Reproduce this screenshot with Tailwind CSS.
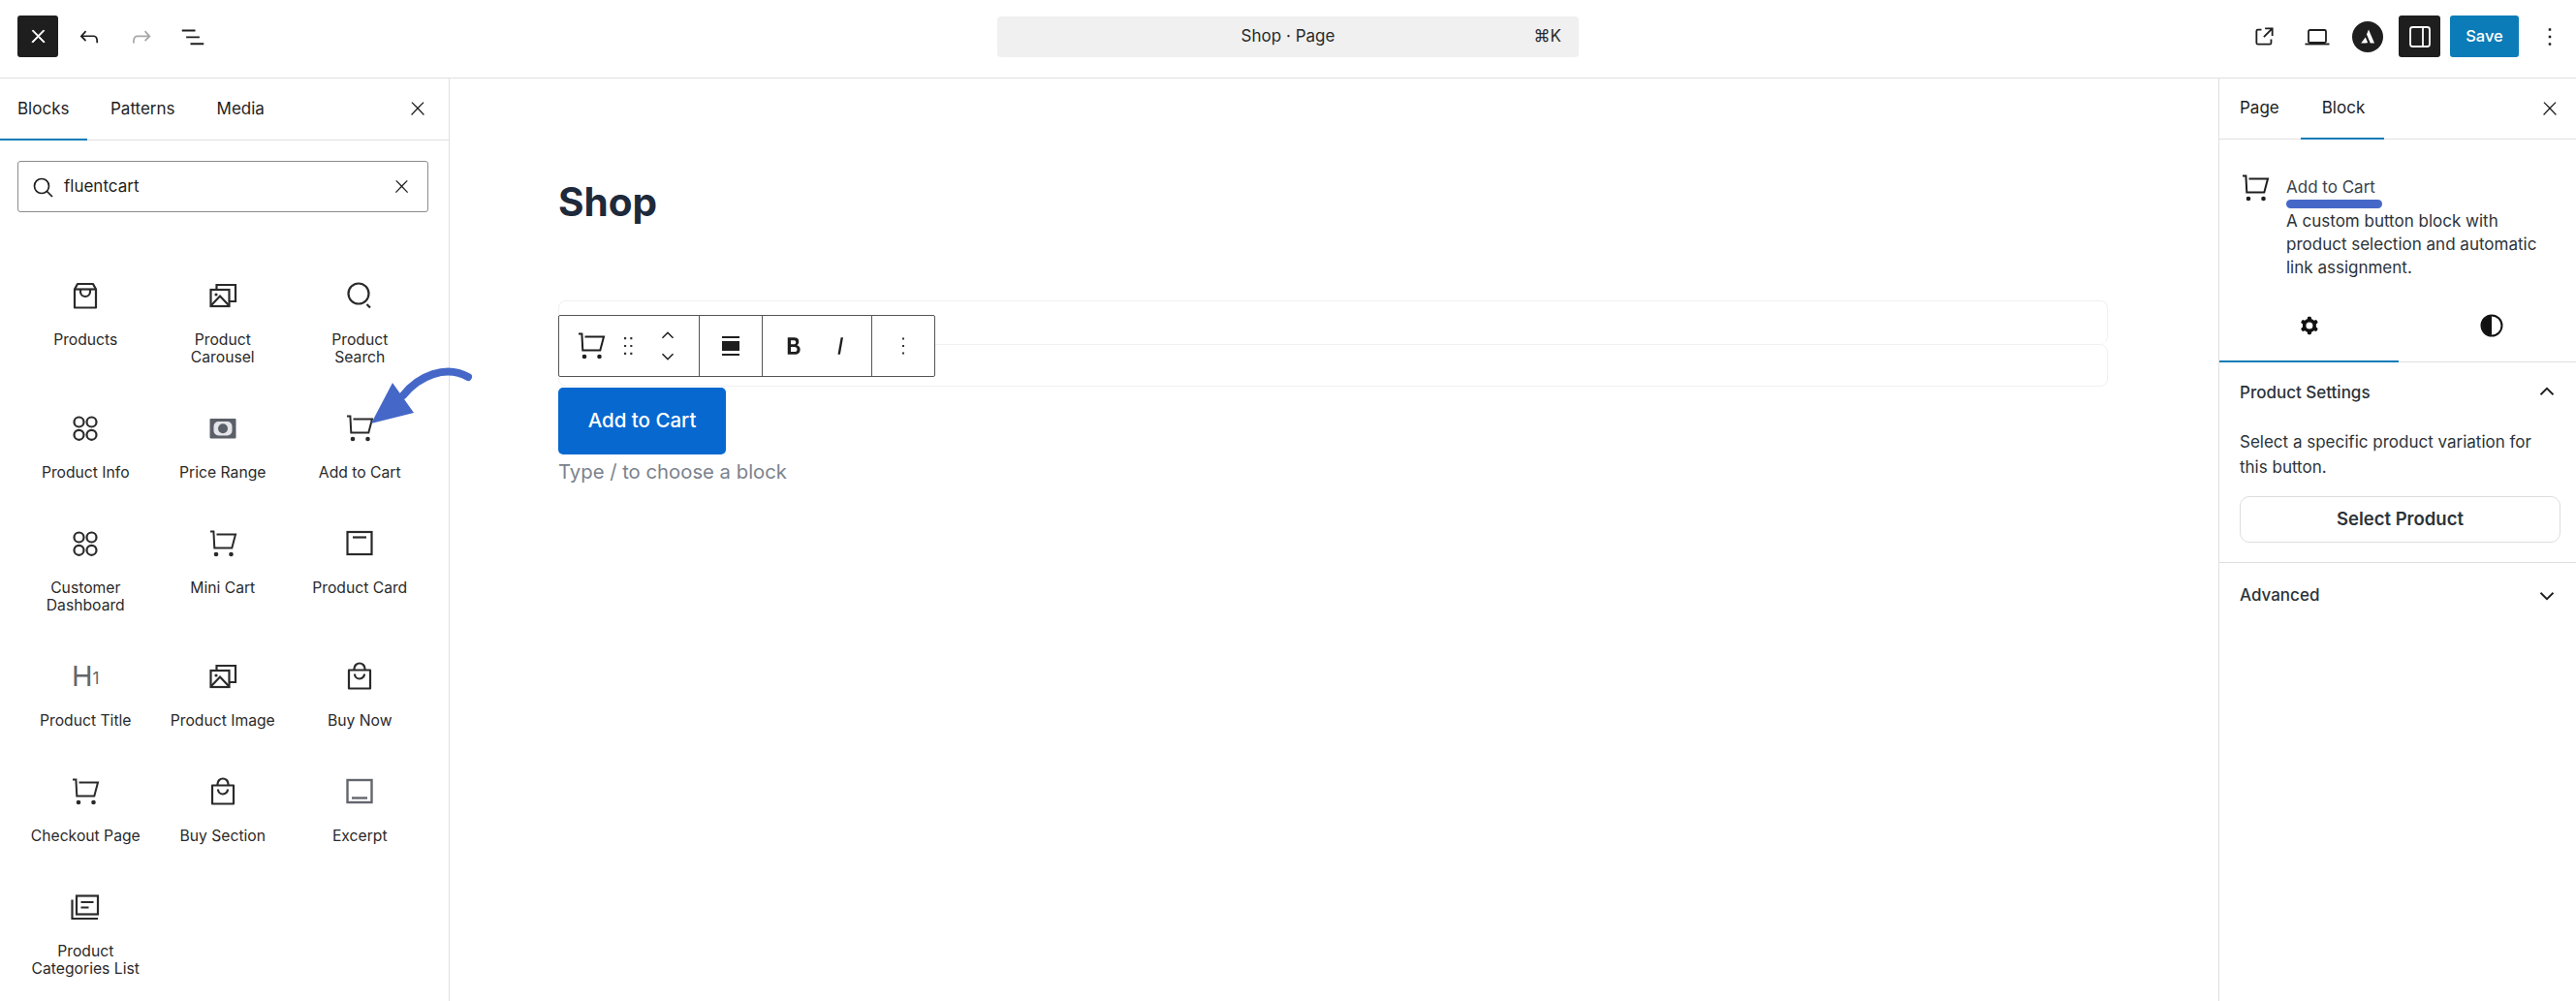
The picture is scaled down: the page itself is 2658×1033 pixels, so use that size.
<!DOCTYPE html>
<html lang="en">
<head>
<meta charset="utf-8">
<title>Shop · Page</title>
<script src="https://cdn.jsdelivr.net/npm/@tailwindcss/browser@4"></script>
</head>
<body class="bg-white text-[#1e1e1e] font-['Inter',sans-serif] overflow-hidden">
<svg class="hidden" xmlns="http://www.w3.org/2000/svg">
  <defs>
    <symbol id="close" viewBox="0 0 24 24"><path fill="currentColor" d="M13 11.800l6.100-6.300-1-1-6.100 6.200-6.100-6.200-1 1 6.100 6.300-6.500 6.700 1 1 6.500-6.600 6.500 6.600 1-1z"/></symbol>
    <symbol id="cart" viewBox="0 0 32 32"><g fill="none" stroke="currentColor" stroke-width="2"><path d="M3 3.500h3.400l.9 17h18l3.700-14H9.500"/></g><circle cx="9" cy="27" r="2.300" fill="currentColor"/><circle cx="24.500" cy="27" r="2.300" fill="currentColor"/></symbol>
    <symbol id="bagbox" viewBox="0 0 32 32"><g fill="none" stroke="currentColor" stroke-width="2.200" stroke-linejoin="round"><path d="M5 9.500 8 4h16l3 5.500V28.500H5z"/><path d="M5 9.500h22"/><path d="M11 10v2a5 5 0 0 0 10 0v-2"/></g></symbol>
    <symbol id="bag" viewBox="0 0 32 32"><g fill="none" stroke="currentColor" stroke-width="2.200" stroke-linejoin="round"><rect x="5" y="9.500" width="22" height="19"/><path d="M10.500 9.500V8a5.500 5.500 0 0 1 11 0v1.500"/><path d="M11 13.500a5 5 0 0 0 10 0"/></g></symbol>
    <symbol id="gallery" viewBox="0 0 32 32"><g fill="none" stroke="currentColor" stroke-width="2.200"><path d="M9.500 9.500V5H29v17h-6.500"/><rect x="3.500" y="10" width="19" height="17"/><path d="M4 26l9-9.500 9 9.500"/></g><circle cx="9" cy="15" r="1.600" fill="currentColor"/></symbol>
    <symbol id="psearch" viewBox="0 0 32 32"><g fill="none" stroke="currentColor" stroke-width="2.200"><circle cx="15" cy="14" r="10.500"/><path d="M23.500 25l3.500 3.500"/></g></symbol>
    <symbol id="four" viewBox="0 0 32 32"><g fill="none" stroke="currentColor" stroke-width="2.200"><circle cx="9.500" cy="9.500" r="5"/><circle cx="22.500" cy="9.500" r="5"/><circle cx="9.500" cy="22.800" r="5"/><circle cx="22.500" cy="22.800" r="5"/></g></symbol>
    <symbol id="price" viewBox="0 0 32 32"><rect x="2.500" y="6" width="27" height="20.500" rx="1" fill="#5b5f68"/><rect x="6.500" y="9" width="19" height="14.500" rx="5" fill="#e4e5e8"/><circle cx="16" cy="16.200" r="5" fill="#5b5f68"/></symbol>
    <symbol id="card" viewBox="0 0 32 32"><g fill="none" stroke="currentColor" stroke-width="2.200"><rect x="3.500" y="4" width="25" height="23"/><path d="M9 9.500h14"/></g></symbol>
    <symbol id="excerpt" viewBox="0 0 32 32"><g fill="none" stroke="#63666d" stroke-width="2.400"><rect x="3.500" y="4" width="25" height="23"/><path d="M8 22.500h16"/></g></symbol>
    <symbol id="cats" viewBox="0 0 32 32"><g fill="none" stroke="currentColor" stroke-width="2.200"><rect x="7" y="4.500" width="22" height="19"/><path d="M2.500 8.500V28H29"/><path d="M11.500 11h13M11.500 16.500h8"/></g></symbol>
    <symbol id="up" viewBox="0 0 24 24"><path fill="none" stroke="currentColor" stroke-width="1.700" d="M6 15l6-6 6 6"/></symbol>
    <symbol id="down" viewBox="0 0 24 24"><path fill="none" stroke="currentColor" stroke-width="1.700" d="M6 9l6 6 6-6"/></symbol>
  </defs>
</svg>

<div class="relative flex h-[1033px] w-[2658px] flex-col">
  <!-- Top bar -->
  <header class="flex h-[81px] shrink-0 items-center border-b border-[#e0e0e0] pb-[5px]">
    <div class="flex flex-1 items-center pl-[18px]">
      <button class="flex h-[43px] w-[42px] items-center justify-center rounded-[3px] bg-[#1e1e1e] text-white">
        <svg class="h-[21px] w-[21px] stroke-current stroke-[1px]"><use href="#close"/></svg>
      </button>
      <svg class="ml-[18px] h-[28px] w-[28px]" viewBox="0 0 24 24"><path fill="currentColor" d="M18.300 11.700c-.6-.6-1.400-.9-2.300-.9H6.700l2.900-3.300-1.100-1-4.500 5L8.500 16l1-1-2.700-3h9.200c.5 0 .9.200 1.300.5 1 1 1 3.400 1 4.500v.3h1.500v-.2c0-1.500 0-4.300-1.500-5.700z"/></svg>
      <svg class="ml-[26px] h-[28px] w-[28px] text-[#a7a7a7]" viewBox="0 0 24 24"><path fill="currentColor" d="M15.600 6.500l-1.100 1 2.900 3.300H8c-.9 0-1.700.3-2.300.9-1.400 1.500-1.400 4.200-1.400 5.600v.2h1.500v-.3c0-1.100 0-3.500 1-4.500.3-.3.7-.5 1.300-.5h9.200L14.500 15l1.100 1.100 4.600-4.600-4.600-5z"/></svg>
      <svg class="ml-[24px] h-[30px] w-[30px]" viewBox="0 0 24 24"><path fill="currentColor" d="M3 6h11v1.500H3V6Zm3.500 5.500h11V13h-11v-1.500ZM21 17H10v1.500h11V17Z"/></svg>
    </div>
    <div class="relative flex h-[42px] w-[600px] items-center justify-center rounded-[4px] bg-[#f0f0f0] text-[17px]">
      <span class="text-[#2a2a2a]">Shop · Page</span>
      <span class="absolute right-[18px] text-[#2a2a2a]">⌘K</span>
    </div>
    <div class="flex flex-1 items-center justify-end pr-[18px]">
      <svg class="mr-[25px] h-[29px] w-[29px]" viewBox="0 0 24 24"><path fill="currentColor" d="M19.500 4.500h-7V6h4.440l-5.970 5.970 1.060 1.060L18 7.060v4.440h1.500v-7Zm-13 1a2 2 0 0 0-2 2v10a2 2 0 0 0 2 2h10a2 2 0 0 0 2-2v-3H17v3a.5.5 0 0 1-.5.5h-10a.5.5 0 0 1-.5-.5v-10a.5.5 0 0 1 .5-.5h3V5.500h-3Z"/></svg>
      <svg class="mr-[21px] h-[30px] w-[30px]" viewBox="0 0 30 30"><g fill="none" stroke="currentColor" stroke-width="1.800"><rect x="6" y="8" width="18" height="13" rx="1.500"/><path d="M2.500 22.500h25"/></g></svg>
      <div class="mr-[16px] flex h-[32px] w-[32px] items-center justify-center rounded-full bg-[#1e1e1e]">
        <svg class="h-[20px] w-[20px]" viewBox="0 0 20 20"><path fill="#fff" d="M11 2.500l6 14h-4.200L9 7.500l2-5zM7.800 10.500l2.300 5.500-2.100.5H3.200l4.600-6z"/></svg>
      </div>
      <button class="flex h-[43px] w-[43px] items-center justify-center rounded-[3px] bg-[#1e1e1e] text-white">
        <svg class="h-[30px] w-[30px]" viewBox="0 0 30 30"><g fill="none" stroke="currentColor" stroke-width="1.800"><rect x="5" y="5" width="20" height="20" rx="2.500"/><path d="M18 5v20"/></g></svg>
      </button>
      <button class="ml-[10px] flex h-[43px] w-[71px] items-center justify-center rounded-[3px] bg-[#0b7cb8] text-[16.500px] font-medium text-white">Save</button>
      <svg class="ml-[17px] mr-[-6px] h-[30px] w-[30px]" viewBox="0 0 24 24"><path fill="currentColor" d="M13 19h-2v-2h2v2zm0-6h-2v-2h2v2zm0-6h-2V5h2v2z"/></svg>
    </div>
  </header>

  <div class="flex min-h-0 flex-1">
    <!-- Inserter -->
    <aside class="w-[464px] shrink-0 border-r border-[#e0e0e0]">
      <div class="relative flex h-[64px] border-b border-[#e0e0e0] text-[17px]">
        <div class="relative flex w-[90px] items-center pl-[18px] pt-[1px]">Blocks<span class="absolute bottom-[-1px] left-0 h-[2px] w-[90px] bg-[#0b7cb8]"></span></div>
        <div class="ml-[24px] flex items-center pt-[1px]">Patterns</div>
        <div class="ml-[43px] flex items-center pt-[1px]">Media</div>
        <svg class="absolute right-[21px] top-[20px] h-[22px] w-[22px]"><use href="#close"/></svg>
      </div>
      <div class="px-[18px] pt-[21px]">
        <div class="flex h-[53px] w-[424px] items-center rounded-[3px] border border-[#8c8c8c] text-[17px]">
          <svg class="ml-[14px] h-[22px] w-[22px]" viewBox="0 0 22 22"><g fill="none" stroke="currentColor" stroke-width="1.700"><circle cx="10" cy="10" r="7.500"/><path d="M15.500 15.500l5.500 5.500"/></g></svg>
          <span class="ml-[11px] flex-1">fluentcart</span>
          <svg class="mr-[16px] h-[21px] w-[21px]"><use href="#close"/></svg>
        </div>
      </div>
      <div class="grid w-[442px] grid-cols-3 pl-[17.500px] pt-[70px] text-center text-[15.700px] leading-[18px] text-[#2a2a2a]">
        <div class="pb-[48px]"><svg class="mx-auto block h-[32px] w-[32px]"><use href="#bagbox"/></svg><div class="mt-[21px]">Products</div></div>
        <div class="pb-[48px]"><svg class="mx-auto block h-[32px] w-[32px]"><use href="#gallery"/></svg><div class="mt-[21px]">Product<br>Carousel</div></div>
        <div class="pb-[48px]"><svg class="mx-auto block h-[32px] w-[32px]"><use href="#psearch"/></svg><div class="mt-[21px]">Product<br>Search</div></div>

        <div class="pb-[48px]"><svg class="mx-auto block h-[32px] w-[32px]"><use href="#four"/></svg><div class="mt-[21px]">Product Info</div></div>
        <div class="pb-[48px]"><svg class="mx-auto block h-[32px] w-[32px]"><use href="#price"/></svg><div class="mt-[21px]">Price Range</div></div>
        <div class="pb-[48px]"><svg class="mx-auto block h-[32px] w-[32px]"><use href="#cart"/></svg><div class="mt-[21px]">Add to Cart</div></div>

        <div class="pb-[48px]"><svg class="mx-auto block h-[32px] w-[32px]"><use href="#four"/></svg><div class="mt-[21px]">Customer<br>Dashboard</div></div>
        <div class="pb-[48px]"><svg class="mx-auto block h-[32px] w-[32px]"><use href="#cart"/></svg><div class="mt-[21px]">Mini Cart</div></div>
        <div class="pb-[48px]"><svg class="mx-auto block h-[32px] w-[32px]"><use href="#card"/></svg><div class="mt-[21px]">Product Card</div></div>

        <div class="pb-[48px]"><div class="mx-auto flex h-[32px] items-end justify-center text-[#63666d]"><span class="text-[29px] leading-[32px]">H</span><span class="text-[17px] leading-[27px]">1</span></div><div class="mt-[21px]">Product Title</div></div>
        <div class="pb-[48px]"><svg class="mx-auto block h-[32px] w-[32px]"><use href="#gallery"/></svg><div class="mt-[21px]">Product Image</div></div>
        <div class="pb-[48px]"><svg class="mx-auto block h-[32px] w-[32px]"><use href="#bag"/></svg><div class="mt-[21px]">Buy Now</div></div>

        <div class="pb-[48px]"><svg class="mx-auto block h-[32px] w-[32px]"><use href="#cart"/></svg><div class="mt-[21px]">Checkout Page</div></div>
        <div class="pb-[48px]"><svg class="mx-auto block h-[32px] w-[32px]"><use href="#bag"/></svg><div class="mt-[21px]">Buy Section</div></div>
        <div class="pb-[48px]"><svg class="mx-auto block h-[32px] w-[32px]"><use href="#excerpt"/></svg><div class="mt-[21px]">Excerpt</div></div>

        <div><svg class="mx-auto block h-[32px] w-[32px]"><use href="#cats"/></svg><div class="mt-[21px]">Product<br>Categories List</div></div>
      </div>
    </aside>

    <!-- Canvas -->
    <main class="relative min-w-0 flex-1 pl-[112px] pr-[114px] pt-[104px]">
      <h1 class="text-[40.500px] font-bold leading-[48px] text-[#1e293b]">Shop</h1>
      <div class="mt-[77px] h-[45px] rounded-[8px] border border-b-0 border-[#f0f0f0]"></div>
      <div class="h-[44px] rounded-[8px] border border-[#f0f0f0]"></div>
      <button class="mt-[1px] block h-[69px] w-[173px] rounded-[5px] bg-[#0768d0] text-[20.500px] font-medium text-white">Add to Cart</button>
      <p class="mt-[3px] text-[20.300px] leading-[30px] text-[#7b828d]">Type / to choose a block</p>

      <!-- Block toolbar -->
      <div class="absolute left-[112px] top-[244px] flex h-[64px] w-[389px] rounded-[2px] border border-[#555] bg-white">
        <div class="flex w-[145px] items-center border-r border-[#555] pl-[17px]">
          <svg class="h-[32px] w-[32px]"><use href="#cart"/></svg>
          <svg class="ml-[7px] h-[30px] w-[30px]" viewBox="0 0 24 24"><path fill="#333" d="M8.800 6.500h1.700v-1.700H8.800v1.700zm0 6.300h1.700v-1.700H8.800v1.700zm0 6.300h1.700v-1.700H8.800v1.700zm5-12.600v0h1.700v-1.700h-1.700v1.700zm0 6.300h1.700v-1.700h-1.700v1.700zm0 6.300h1.700v-1.700h-1.700v1.700z"/></svg>
          <div class="ml-[15px] flex flex-col">
            <svg class="h-[22px] w-[22px]"><use href="#up"/></svg>
            <svg class="h-[22px] w-[22px]"><use href="#down"/></svg>
          </div>
        </div>
        <div class="flex w-[65px] items-center justify-center border-r border-[#555]">
          <svg class="h-[30px] w-[30px]" viewBox="0 0 30 30"><path fill="currentColor" d="M6 5h18v2H6zM6 10h18v10H6zM6 23h18v2H6z"/></svg>
        </div>
        <div class="flex w-[113px] items-center border-r border-[#555] pl-[17px]">
          <svg class="h-[30px] w-[30px]" viewBox="0 0 24 24"><path fill="currentColor" d="M14.700 11.300c1-.6 1.500-1.600 1.500-3 0-2.300-1.300-3.400-4-3.400H7v14h5.800c1.400 0 2.500-.3 3.300-1 .8-.7 1.200-1.700 1.200-2.900.1-1.900-.8-3.100-2.600-3.700zm-5.100-4h2.300c.6 0 1.100.1 1.400.4.3.3.5.7.5 1.200s-.2 1-.5 1.200c-.3.3-.8.4-1.400.4H9.600V7.300zm4.600 9c-.4.3-1 .4-1.700.4H9.600v-3.900h2.900c.7 0 1.300.2 1.700.6.400.4.6.8.6 1.500s-.2 1.100-.6 1.400z"/></svg>
          <svg class="ml-[18px] h-[30px] w-[30px]" viewBox="0 0 24 24"><path fill="currentColor" d="M12.500 5L10 19h1.900l2.500-14z"/></svg>
        </div>
        <div class="flex flex-1 items-center justify-center">
          <svg class="h-[30px] w-[30px]" viewBox="0 0 24 24"><path fill="#333" d="M12.800 18.800h-1.600v-1.600h1.600v1.600zm0-6h-1.600v-1.600h1.600v1.600zm0-6h-1.600V5.200h1.600v1.600z"/></svg>
        </div>
      </div>
    </main>

    <!-- Settings -->
    <aside class="w-[369px] shrink-0 border-l border-[#e0e0e0]">
      <div class="relative flex h-[63px] border-b border-[#e0e0e0] pl-[21px] text-[17px]">
        <div class="flex items-center pb-[1px]">Page</div>
        <div class="relative ml-[44px] flex items-center pb-[1px]">Block<span class="absolute bottom-[-1px] left-[-22px] h-[2px] w-[86px] bg-[#0b7cb8]"></span></div>
        <svg class="absolute right-[16px] top-[20px] h-[22px] w-[22px]"><use href="#close"/></svg>
      </div>
      <div class="flex h-[156px] pl-[21px] pt-[35px]">
        <svg class="h-[32px] w-[32px] -translate-y-[1px]"><use href="#cart"/></svg>
        <div class="relative ml-[16px] w-[290px] text-[17px] leading-[24px] text-[#2c3338]">
          <div class="pt-[2px] text-[#3c434a]">Add to Cart</div>
          <span class="absolute left-0 top-[27px] h-[9px] w-[99px] rounded-full bg-[#4568c8]"></span>
          <p class="mt-[11px]">A custom button block with<br>product selection and automatic<br>link assignment.</p>
        </div>
      </div>
      <div class="flex h-[74px] border-b border-[#e0e0e0]">
        <div class="relative flex w-[185px] items-center justify-center pb-[2px]">
          <svg class="h-[28px] w-[28px]" viewBox="0 0 24 24"><path fill="#111" fill-rule="evenodd" d="M10.289 4.836A1 1 0 0 1 11.275 4h1.306a1 1 0 0 1 .987.836l.244 1.466c.787.26 1.503.679 2.108 1.218l1.393-.522a1 1 0 0 1 1.216.437l.653 1.13a1 1 0 0 1-.23 1.273l-1.148.944a6.025 6.025 0 0 1 0 2.435l1.149.946a1 1 0 0 1 .23 1.272l-.653 1.13a1 1 0 0 1-1.216.437l-1.394-.522c-.605.54-1.32.958-2.108 1.218l-.244 1.466a1 1 0 0 1-.987.836h-1.306a1 1 0 0 1-.986-.836l-.244-1.466a5.995 5.995 0 0 1-2.108-1.218l-1.394.522a1 1 0 0 1-1.217-.436l-.653-1.131a1 1 0 0 1 .23-1.272l1.149-.946a6.026 6.026 0 0 1 0-2.435l-1.148-.944a1 1 0 0 1-.23-1.272l.653-1.131a1 1 0 0 1 1.217-.437l1.393.522a5.994 5.994 0 0 1 2.108-1.218l.244-1.466ZM14.929 12a3 3 0 1 1-6 0 3 3 0 0 1 6 0Z"/></svg>
          <span class="absolute bottom-[-1px] left-0 h-[2px] w-[185px] bg-[#0b7cb8]"></span>
        </div>
        <div class="flex flex-1 items-center justify-center pb-[2px] pl-[8px]">
          <svg class="h-[24px] w-[24px]" viewBox="0 0 24 24"><circle cx="12" cy="12" r="10.500" fill="none" stroke="#111" stroke-width="2"/><path fill="#111" d="M12 2a10 10 0 0 0 0 20z"/></svg>
        </div>
      </div>
      <div class="border-b border-[#e0e0e0] px-[21px] pb-[20px] pt-[20px]">
        <div class="flex h-[24px] items-center justify-between text-[17px] font-medium">
          <span class="text-[#2c3338]">Product Settings</span>
          <svg class="mr-[-4px] h-[26px] w-[26px] -translate-y-[2px]"><use href="#up"/></svg>
        </div>
        <p class="mt-[25px] text-[17px] leading-[26px] text-[#2c3338]">Select a specific product variation for<br>this button.</p>
        <button class="mt-[17px] block h-[48px] w-[331px] rounded-[10px] border border-[#ddd] text-[18.500px] font-semibold text-[#2c3338]">Select Product</button>
      </div>
      <div class="flex h-[66px] items-center justify-between px-[21px] pt-[1px] text-[17px] font-medium">
        <span class="text-[#2c3338]">Advanced</span>
        <svg class="mr-[-4px] h-[26px] w-[26px]"><use href="#down"/></svg>
      </div>
    </aside>
  </div>

  <!-- Annotation arrow -->
  <svg class="pointer-events-none absolute left-[370px] top-[370px] h-[80px] w-[125px]" viewBox="0 0 125 80">
    <path fill="none" stroke="#4568c8" stroke-width="8" stroke-linecap="round" d="M46 38C62 18 90 6 113 19"/>
    <path fill="#4568c8" d="M13 67 35 25 57 56z"/>
  </svg>
</div>
</body>
</html>
